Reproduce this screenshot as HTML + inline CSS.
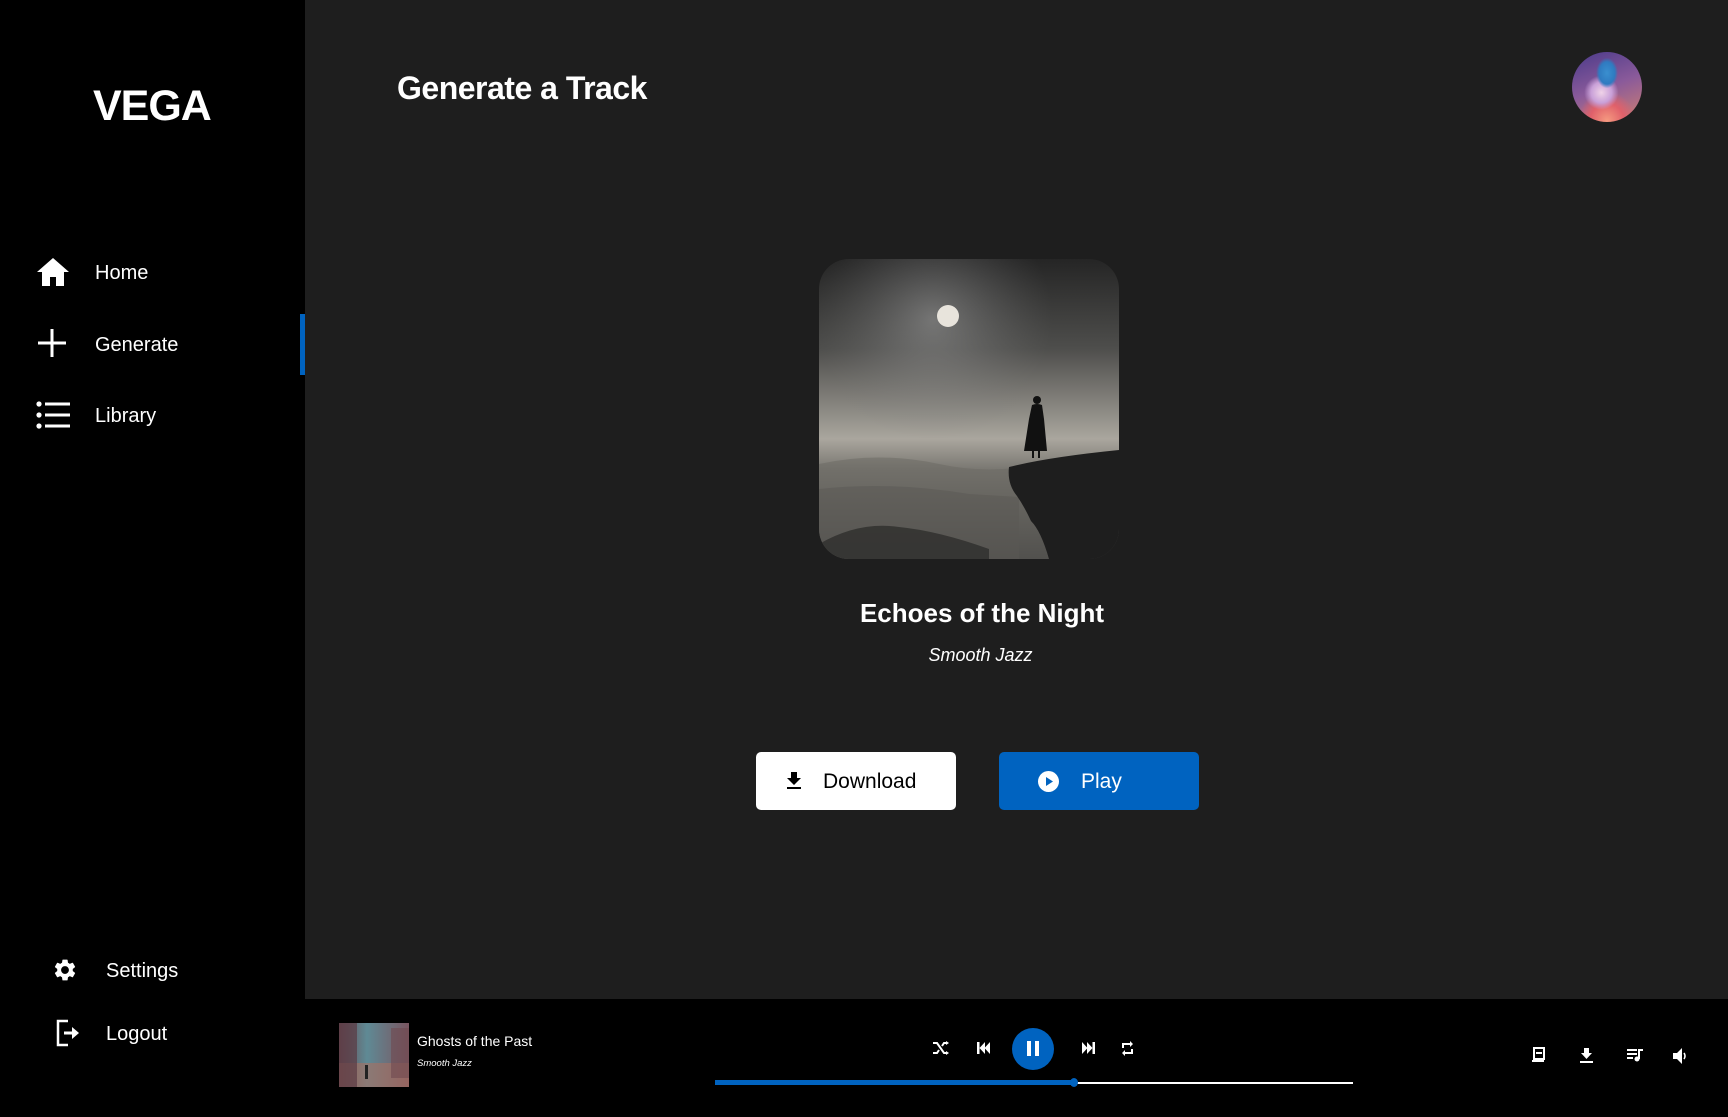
<!DOCTYPE html>
<html><head><meta charset="utf-8"><style>
*{margin:0;padding:0;box-sizing:border-box}
body{width:1728px;height:1117px;background:#1e1e1e;font-family:"Liberation Sans",sans-serif;color:#fff;position:relative;overflow:hidden}
.abs{position:absolute}
.side{left:0;top:0;width:305px;height:999px;background:#000}
.bottom{left:0;top:999px;width:1728px;height:118px;background:#000}
.nav{font-size:20px;line-height:1}
</style></head><body>
<div class="abs side"></div>
<div class="abs bottom"></div>
<div class="abs" style="left:93px;top:82px;font-size:43px;font-weight:bold;letter-spacing:-1px">VEGA</div>

<svg class="abs" style="left:37px;top:258px" width="32" height="28" viewBox="0 0 32 28"><path d="M16 0 L32 14 L27 14 L27 28 L19 28 L19 19 L13 19 L13 28 L5 28 L5 14 L0 14 Z" fill="#fff"/></svg>
<div class="abs nav" style="left:95px;top:263px">Home</div>
<svg class="abs" style="left:38px;top:329px" width="28" height="28"><rect x="12.5" y="0" width="3" height="28" fill="#fff"/><rect x="0" y="12.5" width="28" height="3" fill="#fff"/></svg>
<div class="abs nav" style="left:95px;top:335px">Generate</div>
<div class="abs" style="left:300px;top:314px;width:5px;height:61px;background:#0063c0"></div>
<svg class="abs" style="left:36px;top:401px" width="34" height="28"><circle cx="3" cy="3" r="2.6" fill="#fff"/><circle cx="3" cy="14" r="2.6" fill="#fff"/><circle cx="3" cy="25" r="2.6" fill="#fff"/><rect x="9" y="1.5" width="25" height="3" fill="#fff"/><rect x="9" y="12.5" width="25" height="3" fill="#fff"/><rect x="9" y="23.5" width="25" height="3" fill="#fff"/></svg>
<div class="abs nav" style="left:95px;top:406px">Library</div>

<svg class="abs" style="left:52px;top:957px" width="26" height="26" viewBox="0 0 24 24"><path fill="#fff" d="M19.14 12.94c.04-.3.06-.61.06-.94 0-.32-.02-.64-.07-.94l2.03-1.58c.18-.14.23-.41.12-.61l-1.92-3.32c-.12-.22-.37-.29-.59-.22l-2.39.96c-.5-.38-1.03-.7-1.62-.94l-.36-2.54c-.04-.24-.24-.41-.48-.41h-3.84c-.24 0-.43.17-.47.41l-.36 2.54c-.59.24-1.13.57-1.62.94l-2.39-.96c-.22-.08-.47 0-.59.22L2.74 8.87c-.12.21-.08.47.12.61l2.03 1.58c-.05.3-.09.63-.09.94s.02.64.07.94l-2.03 1.58c-.18.14-.23.41-.12.61l1.92 3.32c.12.22.37.29.59.22l2.39-.96c.5.38 1.03.7 1.62.94l.36 2.54c.05.24.24.41.48.41h3.84c.24 0 .44-.17.47-.41l.36-2.54c.59-.24 1.13-.56 1.62-.94l2.39.96c.22.08.47 0 .59-.22l1.92-3.32c.12-.22.07-.47-.12-.61l-2.01-1.58zM12 15.6c-1.98 0-3.6-1.62-3.6-3.6s1.62-3.6 3.6-3.6 3.6 1.62 3.6 3.6-1.62 3.6-3.6 3.6z"/></svg>
<div class="abs nav" style="left:106px;top:961px">Settings</div>
<svg class="abs" style="left:55px;top:1019px" width="26" height="28" viewBox="0 0 26 28"><path d="M13 2 H3 V26 H13" fill="none" stroke="#fff" stroke-width="2.5"/><path d="M9 14 H18" stroke="#fff" stroke-width="3"/><path d="M17 8 L24 14 L17 20 Z" fill="#fff"/></svg>
<div class="abs nav" style="left:106px;top:1024px">Logout</div>

<div class="abs" style="left:397px;top:70px;font-size:32px;font-weight:bold;letter-spacing:-0.5px">Generate a Track</div>

<div class="abs" style="left:1572px;top:52px;width:70px;height:70px;border-radius:50%;background:radial-gradient(ellipse at 50% 30%,#3a8fcf 0,#2f7ac0 16%,transparent 22%),radial-gradient(circle at 42% 58%,#efd3e8 0,#c9a0d8 18%,transparent 30%),radial-gradient(circle at 50% 98%,#f59a80 0,#e0606a 22%,transparent 38%),linear-gradient(160deg,#4a3a8a,#8a5a9a 50%,#d08070)"></div>

<svg class="abs" style="left:819px;top:259px" width="300" height="300" viewBox="0 0 300 300">
<defs>
<clipPath id="c"><rect width="300" height="300" rx="30"/></clipPath>
<linearGradient id="sky" x1="0" y1="0" x2="0" y2="1"><stop offset="0" stop-color="#252525"/><stop offset=".3" stop-color="#4e4e4c"/><stop offset=".5" stop-color="#8a8882"/><stop offset=".6" stop-color="#aaa69e"/><stop offset=".7" stop-color="#7a7872"/><stop offset="1" stop-color="#3a3a3a"/></linearGradient>
<radialGradient id="glow" cx="38%" cy="20%" r="40%"><stop offset="0" stop-color="#aaa" stop-opacity=".5"/><stop offset="1" stop-color="#777" stop-opacity="0"/></radialGradient>
</defs>
<g clip-path="url(#c)">
<rect width="300" height="300" fill="url(#sky)"/>
<rect width="300" height="300" fill="url(#glow)"/>
<path d="M0 205 Q60 192 120 205 T240 200 L240 300 L0 300Z" fill="#6a6862" opacity=".5"/>
<path d="M0 230 Q70 222 150 235 L200 238 L200 300 L0 300Z" fill="#5a5854" opacity=".5"/>
<path d="M0 285 Q40 262 80 268 Q120 272 170 290 L170 300 L0 300Z" fill="#333331" opacity=".9"/>
<circle cx="129" cy="57" r="11" fill="#e8e4dc"/>
<path d="M190 208 Q230 198 300 191 L300 300 L230 300 Q222 272 212 262 Q205 247 198 237 Q188 225 190 208Z" fill="#1e1e1e"/>
<circle cx="218" cy="141" r="4" fill="#111"/>
<path d="M213 146 Q218 144 223 146 L225 160 L228 192 L205 192 L210 160Z" fill="#111"/>
<rect x="213" y="190" width="2" height="9" fill="#111"/><rect x="219" y="190" width="2" height="9" fill="#111"/>
</g></svg>

<div class="abs" style="left:0;width:1964px;top:598px;text-align:center;font-size:26px;font-weight:bold">Echoes of the Night</div>
<div class="abs" style="left:0;width:1961px;top:645px;text-align:center;font-size:18px;font-style:italic">Smooth Jazz</div>

<div class="abs" style="left:756px;top:752px;width:200px;height:58px;background:#fff;border-radius:5px"></div>
<svg class="abs" style="left:786px;top:772px" width="16" height="18"><path d="M5 0 H11 V6 H15 L8 13 L1 6 H5Z" fill="#000"/><rect x="1" y="15" width="14" height="2" fill="#000"/></svg>
<div class="abs" style="left:823px;top:770px;font-size:21px;color:#000">Download</div>
<div class="abs" style="left:999px;top:752px;width:200px;height:58px;background:#0063c0;border-radius:5px"></div>
<svg class="abs" style="left:1038px;top:771px" width="21" height="21"><circle cx="10.5" cy="10.5" r="10.5" fill="#fff"/><path d="M8 6 L15 10.5 L8 15Z" fill="#0063c0"/></svg>
<div class="abs" style="left:1081px;top:770px;font-size:21px">Play</div>

<svg class="abs" style="left:339px;top:1023px" width="70" height="64"><defs><linearGradient id="t" x1="0" x2="1"><stop offset="0" stop-color="#6a4a50"/><stop offset=".4" stop-color="#5f8a95"/><stop offset="1" stop-color="#7a5560"/></linearGradient></defs><rect width="70" height="64" fill="url(#t)"/><rect y="40" width="70" height="24" fill="#a87060" opacity=".6"/><rect x="0" y="0" width="18" height="64" fill="#5a3a45" opacity=".7"/><rect x="52" y="5" width="18" height="50" fill="#704a50" opacity=".6"/><rect x="26" y="42" width="3" height="14" fill="#222"/></svg>
<div class="abs" style="left:417px;top:1033px;font-size:14px">Ghosts of the Past</div>
<div class="abs" style="left:417px;top:1058px;font-size:9.5px;font-style:italic">Smooth Jazz</div>

<svg class="abs" style="left:933px;top:1041px" width="16" height="14" viewBox="0 0 16 14"><path d="M0 2 H4 L11 12 H14 M0 12 H4 L6 9 M9 5 L11 2 H14" fill="none" stroke="#fff" stroke-width="2"/><path d="M13 0 L16 2 L13 4Z M13 10 L16 12 L13 14Z" fill="#fff"/></svg>
<svg class="abs" style="left:977px;top:1042px" width="13" height="12"><rect x="0" y="0" width="2.5" height="12" fill="#fff"/><path d="M8 0 L2.5 6 L8 12Z M13 0 L7.5 6 L13 12Z" fill="#fff"/></svg>
<div class="abs" style="left:1012px;top:1028px;width:42px;height:42px;border-radius:50%;background:#0063c0"></div>
<svg class="abs" style="left:1027px;top:1041px" width="12" height="15"><rect x="0" y="0" width="4" height="15" fill="#fff"/><rect x="8" y="0" width="4" height="15" fill="#fff"/></svg>
<svg class="abs" style="left:1082px;top:1042px" width="13" height="12"><path d="M0 0 L5.5 6 L0 12Z M5 0 L10.5 6 L5 12Z" fill="#fff"/><rect x="10.5" y="0" width="2.5" height="12" fill="#fff"/></svg>
<svg class="abs" style="left:1121px;top:1041px" width="13" height="15" viewBox="0 0 13 15"><path d="M2 7 V3 H11 M11 8 V12 H2" fill="none" stroke="#fff" stroke-width="2"/><path d="M9 0 L12 3 L9 6Z M4 9 L1 12 L4 15Z" fill="#fff"/></svg>
<div class="abs" style="left:715px;top:1082px;width:638px;height:2px;background:#fff"></div>
<div class="abs" style="left:715px;top:1080px;width:359px;height:5px;background:#0063c0"></div>
<div class="abs" style="left:1070px;top:1078px;width:8px;height:9px;border-radius:50%;background:#0063c0"></div>

<svg class="abs" style="left:1532px;top:1047px" width="14" height="16"><rect x="2" y="1" width="10" height="11" fill="none" stroke="#fff" stroke-width="2"/><rect x="4" y="5" width="6" height="2" fill="#fff"/><rect x="0" y="13" width="12" height="2" fill="#fff"/></svg>
<svg class="abs" style="left:1580px;top:1048px" width="13" height="15"><path d="M4 0 H9 V5 H12 L6.5 11 L1 5 H4Z" fill="#fff"/><rect x="0" y="13" width="13" height="2" fill="#fff"/></svg>
<svg class="abs" style="left:1627px;top:1048px" width="16" height="14"><rect x="0" y="1" width="10" height="2" fill="#fff"/><rect x="0" y="5" width="10" height="2" fill="#fff"/><rect x="0" y="9" width="6" height="2" fill="#fff"/><rect x="11" y="1" width="2" height="10" fill="#fff"/><rect x="11" y="1" width="5" height="2" fill="#fff"/><circle cx="10" cy="11" r="2.5" fill="#fff"/></svg>
<svg class="abs" style="left:1673px;top:1048px" width="14" height="16"><path d="M0 5 H4 L9 0 V16 L4 11 H0Z" fill="#fff"/><path d="M11 5 Q13 8 11 11" fill="none" stroke="#fff" stroke-width="1.6"/></svg>
</body></html>
